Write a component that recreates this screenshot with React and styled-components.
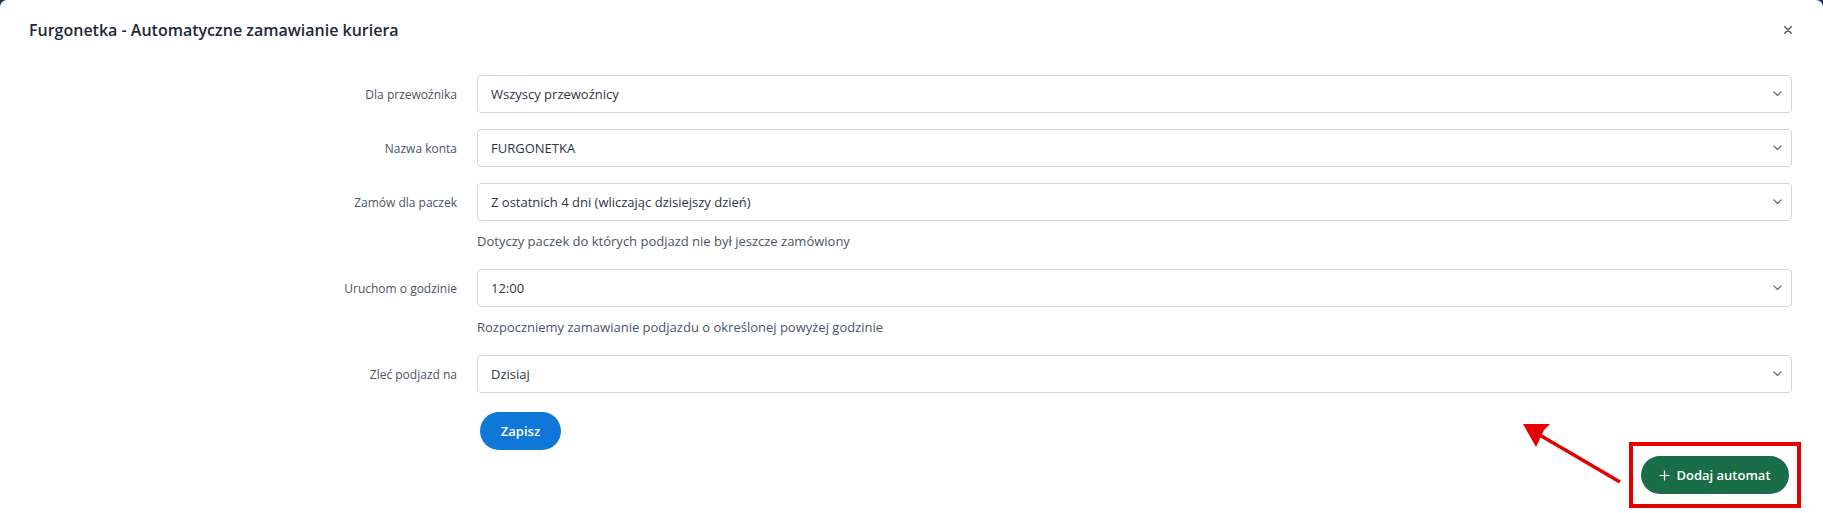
import React from "react";
import styled, { createGlobalStyle } from "styled-components";

const Global = createGlobalStyle`
  html, body { margin: 0; padding: 0; }
  body {
    background: #1b355a;
    font-family: "Segoe UI", "Open Sans", "Noto Sans", sans-serif;
    -webkit-font-smoothing: antialiased;
  }
  * { box-sizing: border-box; }
`;

const Modal = styled.div`
  position: relative;
  width: 1823px;
  height: 513px;
  background: #ffffff;
  border-radius: 7px 7px 0 0;
  overflow: hidden;
`;

const Header = styled.div`
  display: flex;
  align-items: center;
  justify-content: space-between;
  height: 60px;
  padding: 0 29px 0 29px;
`;

const Title = styled.h1`
  margin: 0;
  font-size: 16px;
  font-weight: 600;
  color: #1d2a3a;
  line-height: 20px;
`;

const Close = styled.button`
  border: 0;
  background: none;
  padding: 0;
  width: 12px;
  height: 12px;
  display: flex;
  align-items: center;
  justify-content: center;
  color: #515b6a;
  cursor: pointer;
`;

const Form = styled.div`
  display: grid;
  grid-template-columns: 428px 1fr;
  column-gap: 20px;
  padding: 15px 31px 0 29px;
`;

const Label = styled.div`
  height: 38px;
  display: flex;
  align-items: center;
  justify-content: flex-end;
  font-size: 12px;
  color: #4b5565;
`;

const Field = styled.div`
  margin-bottom: ${(p) => (p.$last ? "19px" : "16px")};
`;

const SelectBox = styled.div`
  position: relative;
  height: 38px;
  border: 1px solid #d3d6dc;
  border-radius: 4px;
  display: flex;
  align-items: center;
  padding: 0 30px 0 13px;
  font-size: 13px;
  color: #2d3646;
  background: #fff;
`;

const Chevron = styled.span`
  position: absolute;
  right: 9px;
  top: 50%;
  transform: translateY(-50%);
  display: flex;
  color: #6b7280;
`;

const Help = styled.div`
  margin-top: 8px;
  height: 24px;
  line-height: 24px;
  font-size: 13px;
  color: #4b5565;
`;

const Empty = styled.div``;

const PrimaryButton = styled.button`
  margin-left: 3px;
  height: 38px;
  width: 81px;
  border: 0;
  border-radius: 19px;
  background: #0f78d7;
  color: #fff;
  font-family: inherit;
  font-size: 13px;
  font-weight: 600;
  cursor: pointer;
`;

const Footer = styled.div`
  display: flex;
  justify-content: flex-end;
  padding: 6px 34px 0 0;
`;

const Highlight = styled.div`
  position: relative;
`;

const Frame = styled.span`
  position: absolute;
  top: -14px;
  bottom: -14px;
  left: -12px;
  right: -12px;
  border: 4px solid #e30000;
  pointer-events: none;
`;

const SuccessButton = styled.button`
  height: 38px;
  width: 148px;
  border: 0;
  border-radius: 19px;
  background: #1a6e47;
  color: #fff;
  font-family: inherit;
  font-size: 13px;
  font-weight: 600;
  display: flex;
  align-items: center;
  justify-content: center;
  gap: 6px;
  cursor: pointer;
`;

const Arrow = styled.svg`
  position: absolute;
  left: 1500px;
  top: 400px;
  pointer-events: none;
`;

const ChevronIcon = () => (
  <svg width="9" height="6" viewBox="0 0 9 6" fill="none">
    <path d="M1 1l3.5 3.5L8 1" stroke="currentColor" strokeWidth="1.3" strokeLinecap="round" strokeLinejoin="round" />
  </svg>
);

const Select = ({ children }) => (
  <SelectBox>
    {children}
    <Chevron>
      <ChevronIcon />
    </Chevron>
  </SelectBox>
);

const rows = [
  { label: "Dla przewoźnika", value: "Wszyscy przewoźnicy" },
  { label: "Nazwa konta", value: "FURGONETKA" },
  {
    label: "Zamów dla paczek",
    value: "Z ostatnich 4 dni (wliczając dzisiejszy dzień)",
    help: "Dotyczy paczek do których podjazd nie był jeszcze zamówiony",
  },
  {
    label: "Uruchom o godzinie",
    value: "12:00",
    help: "Rozpoczniemy zamawianie podjazdu o określonej powyżej godzinie",
  },
  { label: "Zleć podjazd na", value: "Dzisiaj", last: true },
];

export default function App() {
  return (
    <>
      <Global />
      <Modal>
        <Header>
          <Title>Furgonetka - Automatyczne zamawianie kuriera</Title>
          <Close aria-label="Zamknij">
            <svg width="10" height="10" viewBox="0 0 10 10">
              <path d="M1.8 1.8l6.4 6.4M8.2 1.8l-6.4 6.4" stroke="currentColor" strokeWidth="1.6" strokeLinecap="round" />
            </svg>
          </Close>
        </Header>
        <Form>
          {rows.map((r) => (
            <React.Fragment key={r.label}>
              <Label>{r.label}</Label>
              <Field $last={r.last}>
                <Select>{r.value}</Select>
                {r.help && <Help>{r.help}</Help>}
              </Field>
            </React.Fragment>
          ))}
          <Empty />
          <div>
            <PrimaryButton>Zapisz</PrimaryButton>
          </div>
        </Form>
        <Footer>
          <Highlight>
            <SuccessButton>
              <svg width="11" height="11" viewBox="0 0 11 11">
                <path d="M5.5 0.5v10M0.5 5.5h10" stroke="currentColor" strokeWidth="1.2" />
              </svg>
              Dodaj automat
            </SuccessButton>
            <Frame />
          </Highlight>
        </Footer>
        <Arrow width="130" height="90" viewBox="0 0 130 90">
          <line x1="120" y1="82" x2="38" y2="34" stroke="#e30000" strokeWidth="3.5" />
          <polygon points="23,24 50,24 44,30 36,47" fill="#e30000" />
        </Arrow>
      </Modal>
    </>
  );
}
